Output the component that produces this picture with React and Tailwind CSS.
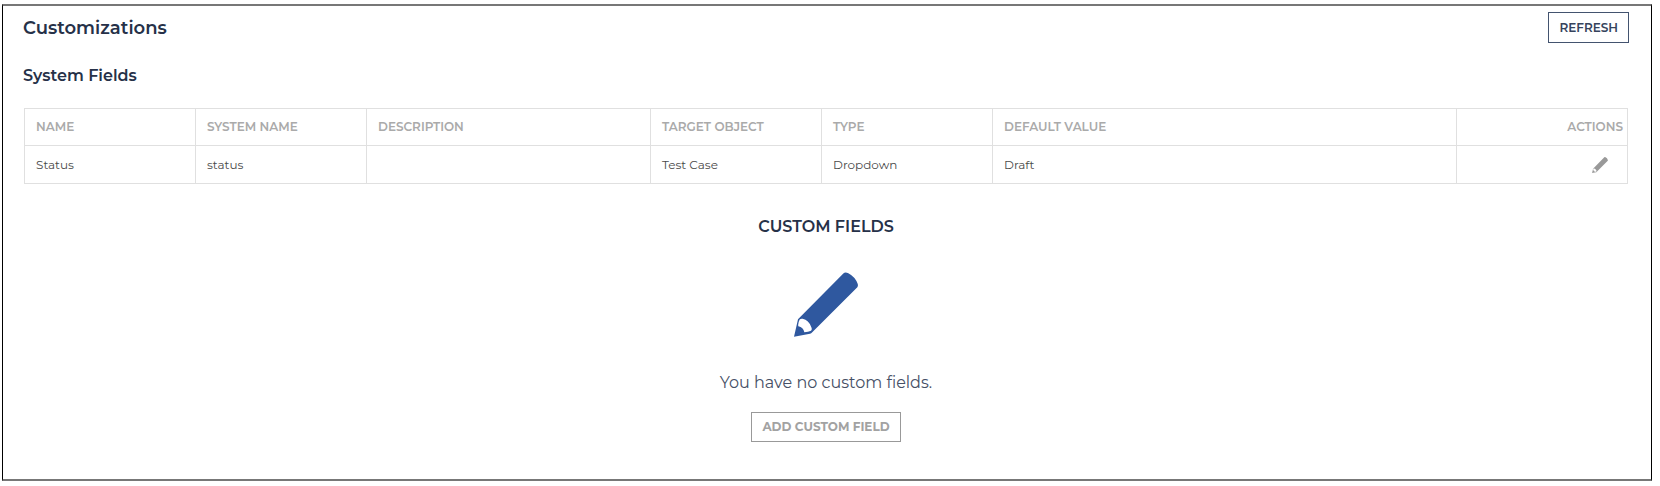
const COLUMNS = [
  { key: 'name', label: 'Name', width: 'w-[171px]' },
  { key: 'systemName', label: 'System Name', width: 'w-[171px]' },
  { key: 'description', label: 'Description', width: 'w-[284px]' },
  { key: 'target', label: 'Target Object', width: 'w-[171px]' },
  { key: 'type', label: 'Type', width: 'w-[171px]' },
  { key: 'defaultValue', label: 'Default Value', width: '' },
]

const SYSTEM_FIELDS = [
  {
    name: 'Status',
    systemName: 'status',
    description: '',
    target: 'Test Case',
    type: 'Dropdown',
    defaultValue: 'Draft',
  },
]

function PencilIcon({ className }) {
  return (
    <svg viewBox="0 0 192 194" className={className} fill="currentColor" fillRule="evenodd" aria-hidden="true">
      <path d="M0 194 12 141 148 4Q153 -1 163 3 184 14 191 35 193 41 190 45L54 181Q52 184 48 185ZM17 142Q11 154 13 162 28 165 31 180 43 180 51 176 55 172 52 165 44 144 26 140 20 139 17 142Z" />
    </svg>
  )
}

function SystemFieldsTable({ fields }) {
  return (
    <table className="w-full table-fixed border-collapse text-left text-xs">
      <thead>
        <tr className="h-[37px] uppercase text-[#aaaaaa]">
          {COLUMNS.map((column) => (
            <th
              key={column.key}
              scope="col"
              className={`${column.width} border border-[#e0e0e0] px-[11px] font-semibold`}
            >
              {column.label}
            </th>
          ))}
          <th scope="col" className="w-[171px] border border-[#e0e0e0] px-1 text-right font-semibold">
            Actions
          </th>
        </tr>
      </thead>
      <tbody>
        {fields.map((field) => (
          <tr key={field.systemName} className="h-[38px] text-[#4a4a4a]">
            {COLUMNS.map((column) => (
              <td key={column.key} className="border border-[#e0e0e0] px-[11px]">
                {field[column.key]}
              </td>
            ))}
            <td className="border border-[#e0e0e0] px-[19px]">
              <button type="button" aria-label={`Edit ${field.name}`} className="ml-auto block text-[#999999]">
                <PencilIcon className="size-4" />
              </button>
            </td>
          </tr>
        ))}
      </tbody>
    </table>
  )
}

export default function App() {
  return (
    <div className="min-h-screen bg-white pt-1 pr-2 pb-[5px] pl-[2px] font-['Montserrat','Inter',sans-serif] text-[#263148]">
      <main className="border-x border-y-2 border-x-black border-y-[#777777] pr-[22px] pb-[37px] pl-5">
        <header className="flex items-start justify-between pt-[6px]">
          <h1 className="pt-[2px] text-lg font-semibold">Customizations</h1>
          <button
            type="button"
            className="h-[31px] border border-[#43536f] px-[10px] text-xs font-semibold uppercase text-[#36435c]"
          >
            Refresh
          </button>
        </header>

        <section className="pt-[21px]">
          <h2 className="text-base font-semibold">System Fields</h2>
          <div className="px-px pt-5">
            <SystemFieldsTable fields={SYSTEM_FIELDS} />
          </div>
        </section>

        <section className="flex flex-col items-center pt-[31px]">
          <h2 className="text-base font-semibold uppercase">Custom Fields</h2>
          <PencilIcon className="mt-[33px] h-[65px] w-16 text-[#2f589f]" />
          <p className="mt-[34px] text-base text-[#465066]">You have no custom fields.</p>
          <button
            type="button"
            className="mt-[17px] h-[30px] border border-[#999999] px-[10px] text-xs font-bold uppercase text-[#a2a2a2]"
          >
            Add Custom Field
          </button>
        </section>
      </main>
    </div>
  )
}
